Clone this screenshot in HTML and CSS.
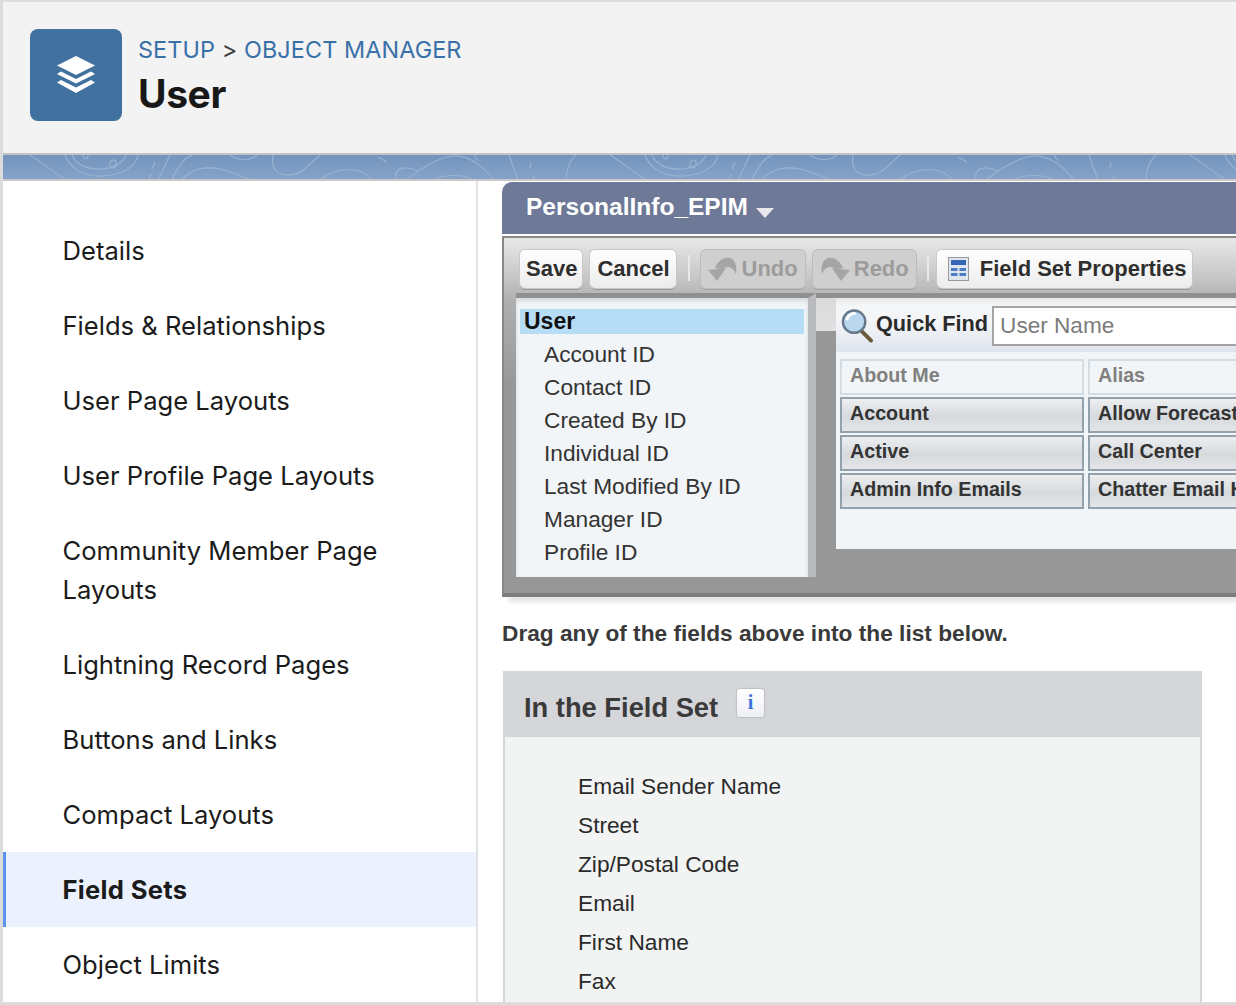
FILE: index.html
```html
<!DOCTYPE html>
<html lang="en">
<head>
<meta charset="utf-8">
<title>User | Object Manager</title>
<link rel="stylesheet" href="styles.css">
</head>
<body>
<div class="page">
  <header class="head">
    <div class="logo">
      <svg width="40" height="38" viewBox="0 0 40 38"><path d="M20 0 39 9.500 20 19 1 9.500Z" fill="#fff"/><path d="M5 15.500 20 23 35 15.500 39 18 20 27.500 1 18Z" fill="#fff"/><path d="M5 24 20 31.500 35 24 39 26.500 20 37 1 26.500Z" fill="#fff"/></svg>
    </div>
    <div class="head-text">
      <div class="crumb"><span class="crumb-link">SETUP</span> &gt; <span class="crumb-link">OBJECT MANAGER</span></div>
      <h1 class="title">User</h1>
    </div>
  </header>
  <div class="banner">
    <svg class="topo" width="1236" height="24" viewBox="0 0 1236 24" fill="none">
      <defs>
        <pattern id="topo" width="580" height="24" patternUnits="userSpaceOnUse" patternTransform="translate(-3 0)">
          <g fill="none" stroke="#9bb3d1" stroke-width="1.100">
            <path d="M30 0C40 6 52 16 66 25"/>
            <path d="M65 0C70 14 85 22 103 21C122 20 136 12 138 0"/>
            <path d="M72 0C76 10 88 15 102 14C112 13 122 10 126 0"/>
            <path d="M83 0C83 5 88 5 88 0"/>
            <ellipse cx="113" cy="9" rx="3" ry="4" transform="rotate(15 113 9)"/>
            <path d="M155 7 152 14M151 19 149 24M170 0 158 25"/>
            <path d="M172 25C178 10 185 3 192 0"/>
            <path d="M182 25C190 14 205 11 220 14C232 17 242 21 250 25"/>
            <path d="M230 0C238 6 250 6 257 0"/>
            <path d="M273 0C271 12 275 20 287 20C302 21 310 8 320 0"/>
            <path d="M320 25C330 16 342 14 354 15C362 16 368 20 372 25"/>
            <path d="M378 2 387 7"/>
            <path d="M396 25C394 16 400 12 407 13C411 13 414 14 417 16"/>
            <path d="M406 25C420 14 438 3 453 1C470 0 484 12 494 25"/>
            <path d="M433 25C442 20 462 18 473 25"/>
            <path d="M474 0 478 6"/>
            <path d="M509 0 518 25"/>
            <path d="M531 7 530 14M533 21 535 25"/>
            <path d="M566 25C566 15 570 5 576 0"/>
          </g>
        </pattern>
      </defs>
      <rect width="1236" height="24" fill="url(#topo)"/>
    </svg>
  </div>
  <div class="main">
    <nav class="side">
      <a class="side-item">Details</a>
      <a class="side-item">Fields &amp; Relationships</a>
      <a class="side-item">User Page Layouts</a>
      <a class="side-item">User Profile Page Layouts</a>
      <a class="side-item">Community Member Page Layouts</a>
      <a class="side-item">Lightning Record Pages</a>
      <a class="side-item">Buttons and Links</a>
      <a class="side-item">Compact Layouts</a>
      <a class="side-item side-active">Field Sets</a>
      <a class="side-item">Object Limits</a>
    </nav>
    <section class="content">
      <div class="editor">
        <div class="editor-title"><span>PersonalInfo_EPIM</span><i class="caret"></i></div>
        <div class="editor-body">
          <div class="toolbar">
            <button class="btn">Save</button>
            <button class="btn btn-wide">Cancel</button>
            <span class="sep"></span>
            <button class="btn btn-off"><svg width="30" height="24" viewBox="0 0 30 24"><path d="M0 13 18 11 9 24Z" fill="#a5a5a5"/><path d="M7 11C10 3 17 0 22 1C28 3 29 10 28 17C25 10 20 8 14 12Z" fill="#a5a5a5"/></svg>Undo</button>
            <button class="btn btn-off"><svg width="30" height="24" viewBox="0 0 30 24"><path d="M30 13 12 11 21 24Z" fill="#a5a5a5"/><path d="M23 11C20 3 13 0 8 1C2 3 1 10 2 17C5 10 10 8 16 12Z" fill="#a5a5a5"/></svg>Redo</button>
            <span class="sep sep-last"></span>
            <button class="btn btn-props"><svg width="21" height="24" viewBox="0 0 21 24"><rect x="0.500" y="0.500" width="20" height="23" fill="#dfe6f0" stroke="#9a9a9a"/><rect x="3" y="3" width="15" height="5" fill="#3667b5"/><path d="M3 11H9.500V14H3ZM11.500 11H18V14H11.500ZM3 16H9.500V19H3ZM11.500 16H18V19H11.500Z" fill="#4b7cc4"/></svg>Field Set Properties</button>
          </div>
          <div class="split">
            <div class="tree-wrap">
              <ul class="tree">
                <li class="tree-root">User</li>
                <li>Account ID</li>
                <li>Contact ID</li>
                <li>Created By ID</li>
                <li>Individual ID</li>
                <li>Last Modified By ID</li>
                <li>Manager ID</li>
                <li>Profile ID</li>
                <li>Role ID</li>
              </ul>
            </div>
            <div class="palette">
              <div class="find">
                <svg class="lens" width="33" height="36" viewBox="0 0 34 36"><path d="M21 23 31 33" stroke="#6b5a3c" stroke-width="4" stroke-linecap="round"/><circle cx="13.500" cy="13.500" r="11.500" fill="#b9d8ef" stroke="#66788a" stroke-width="2.500"/><path d="M6 12C7 7 11 5 15 5" stroke="#fff" stroke-width="3" fill="none"/></svg>
                <label class="find-label">Quick Find</label>
                <input class="find-input" type="text" placeholder="User Name">
              </div>
              <div class="fields">
                <div class="field field-used">About Me</div>
                <div class="field field-used">Alias</div>
                <div class="field">Account</div>
                <div class="field">Allow Forecasting</div>
                <div class="field">Active</div>
                <div class="field">Call Center</div>
                <div class="field">Admin Info Emails</div>
                <div class="field">Chatter Email Highlights</div>
              </div>
            </div>
          </div>
        </div>
      </div>
      <p class="hint">Drag any of the fields above into the list below.</p>
      <div class="set">
        <div class="set-head"><h2 class="set-title">In the Field Set</h2><span class="info">i</span></div>
        <ul class="set-list">
          <li>Email Sender Name</li>
          <li>Street</li>
          <li>Zip/Postal Code</li>
          <li>Email</li>
          <li>First Name</li>
          <li>Fax</li>
        </ul>
      </div>
    </section>
  </div>
</div>
</body>
</html>
```
FILE: styles.css
```css
* { box-sizing: border-box; }
html, body { margin: 0; height: 100%; overflow: hidden; background: #fff; }
.page {
  width: 1236px; height: 1005px; overflow: hidden;
  display: flex; flex-direction: column;
  border-top: 2px solid #dcdcdc; border-left: 3px solid #dcdcdc; border-bottom: 3px solid #dcdcdc;
  font-family: Inter, sans-serif;
}
.head {
  height: 151px; flex: none; background: #f3f3f3;
  display: flex; align-items: flex-start; gap: 16px;
  padding: 27px 0 0 27px;
}
.logo {
  width: 92px; height: 92px; border-radius: 8px; background: #41729f;
  display: flex; align-items: center; justify-content: center;
}
.head-text { padding-top: 5px; }
.crumb { font-size: 23.400px; line-height: 32px; color: #3c3c3c; letter-spacing: .1px; }
.crumb-link { color: #3a70a8; }
.title { margin: 6px 0 0; font-size: 39px; line-height: 44px; font-weight: 700; color: #181818; letter-spacing: -.4px; }
.banner {
  height: 28px; flex: none; overflow: hidden;
  background: linear-gradient(#7394bd, #85a3c8);
  border-top: 2px solid #c4c4c4; border-bottom: 2px solid #c8c8c8;
}
.topo { display: block; }
.main { flex: 1; display: flex; min-height: 0; }
.side {
  width: 475px; flex: none; background: #fff;
  border-right: 2px solid #e2e2e2; padding-top: 32px;
}
.side-item {
  display: block; padding: 18px 59.500px; font-size: 25.600px; line-height: 39px; color: #1b1b1b;
}
.side-active {
  background: #ecf2fd; font-weight: 700; letter-spacing: .3px;
  box-shadow: inset 3px 0 0 #5b93ee;
}
.content { flex: 1; min-width: 0; padding-left: 24px; font-family: "Liberation Sans", Arial, sans-serif; }
.editor { width: 900px; margin-top: 1px; box-shadow: 6px 5px 4px rgba(0,0,0,.1); }
.editor-title {
  height: 52px; background: #6d7997; border-radius: 10px 0 0 0;
  padding: 9px 0 0 24px; color: #fff; font-size: 24.500px; font-weight: 700; line-height: 32px;
  display: flex; align-items: flex-start;
}
.caret {
  margin: 17px 0 0 8px; width: 0; height: 0;
  border-left: 9.500px solid transparent; border-right: 9.500px solid transparent; border-top: 10px solid #e8e8ec;
}
.editor-body {
  margin-top: 2px; height: 361px; padding: 0 0 0 12px;
  background: linear-gradient(#e8e8e8 0, #c6c6c6 40px, #b0b0b0 62px, #979797 150px);
  border-left: 2px solid #8c8686; border-top: 2px solid #8c8686; border-bottom: 4px solid #7d7d7d;
}
.toolbar { height: 55px; display: flex; align-items: flex-start; gap: 8px; padding-top: 12px; padding-left: 4px; }
.btn {
  height: 38px; padding: 0 5px 0 6px; display: inline-flex; align-items: center;
  font: 700 22px "Liberation Sans", Arial, sans-serif; color: #2f2f2f; white-space: nowrap;
  background: linear-gradient(#fff, #ececec); border: 0; border-radius: 5px;
  box-shadow: 0 0 0 1px #c8c8c8, 0 2px 0 #969696;
}
.btn-wide { padding: 0 6px 0 7px; }
.btn-off { background: #cfcfcf; color: #9c9c9c; box-shadow: 0 0 0 1px #bdbdbd, 0 2px 0 #a2a2a2; padding: 0 7px; gap: 4px; }
.btn-props { padding: 0 6px 0 11px; gap: 11px; }
.sep { width: 2px; height: 26px; margin: 5px 3px 0 4px; background: #e8e8e8; }
.sep-last { margin-right: 0; margin-left: 3px; }
.split { display: flex; align-items: flex-start; }
.tree-wrap {
  width: 300px; height: 284px; flex: none; overflow: hidden; background: #f2f5f7;
  border-top: 5px solid #8f8f8f; border-right: 8px solid #b8babe;
  box-shadow: inset 0 3px 4px rgba(0,0,0,.12);
}
.tree { list-style: none; margin: 0; padding: 11px 4px 0; font-size: 22.700px; line-height: 33px; color: #333; }
.tree li { padding-left: 24px; white-space: nowrap; }
.tree .tree-root { padding-left: 4px; height: 25px; line-height: 25px; margin-bottom: 4px; background: #b7dcf5; color: #111; font-size: 23px; font-weight: 700; }
.palette {
  width: 580px; height: 256px; padding-left: 20px;
  background: linear-gradient(#d9d9d9 0, #e0e0e0 33px, #979797 33px);
  border-top: 5px solid #8f8f8f;
}
.find {
  height: 54px; padding: 8px 0 0 5px; display: flex; align-items: flex-start;
  background: linear-gradient(#e8e8e8 0, #f4f6f8 8px, #f2f4f7 25px, #dfe5ee 100%);
}
.lens { flex: none; margin-top: 2px; }
.find-label { font-size: 21.700px; font-weight: 700; color: #2a2a2a; margin: 3px 0 0 2px; white-space: nowrap; line-height: 30px; }
.find-input {
  width: 400px; height: 40px; margin: 0 0 0 4px; padding: 0 6px;
  border: 2px solid #a4a4a4; background: #fff; font: 22.600px "Liberation Sans", Arial, sans-serif; color: #777;
}
.find-input::placeholder { color: #7b7b7b; opacity: 1; }
.fields {
  display: grid; grid-template-columns: 244px 300px; column-gap: 4px; row-gap: 2px; align-content: start;
  height: 197px; padding: 7px 0 0 4px; background: #f2f5f7;
}
.field {
  height: 36px; padding-left: 8px; line-height: 28px; font-size: 19.700px; font-weight: 700; color: #333;
  white-space: nowrap; overflow: hidden;
  border: 2px solid #93a1ac; background: linear-gradient(#eceef0, #d7dadd 55%, #e3e5e7);
}
.field-used { border-color: #d3dde3; background: #f2f5f7; color: #808080; }
.hint { margin: 22px 0 24px; font-size: 22.700px; line-height: 28px; font-weight: 700; color: #3a3a3a; }
.set { width: 699px; margin-left: 1px; background: #f2f4f3; border: solid #d5d6da; border-width: 0 2px; height: 340px; }
.set-head { height: 66px; margin: 0 -2px; background: #d5d6da; padding: 19px 0 0 21px; display: flex; align-items: flex-start; }
.set-title { margin: 0; font-size: 27.300px; line-height: 36px; color: #3a3a3a; }
.info {
  width: 27px; height: 28px; margin: -1px 0 0 19px; border-radius: 3px; text-align: center;
  background: linear-gradient(#fff, #edf0f5); box-shadow: 0 0 2px #8a8a8a;
  font: 700 20px/26px "Liberation Serif", serif; color: #3b72d9;
}
.set-list { list-style: none; margin: 0; padding: 30px 0 0 73px; font-size: 22.700px; line-height: 39px; color: #2a2a2a; }
```
